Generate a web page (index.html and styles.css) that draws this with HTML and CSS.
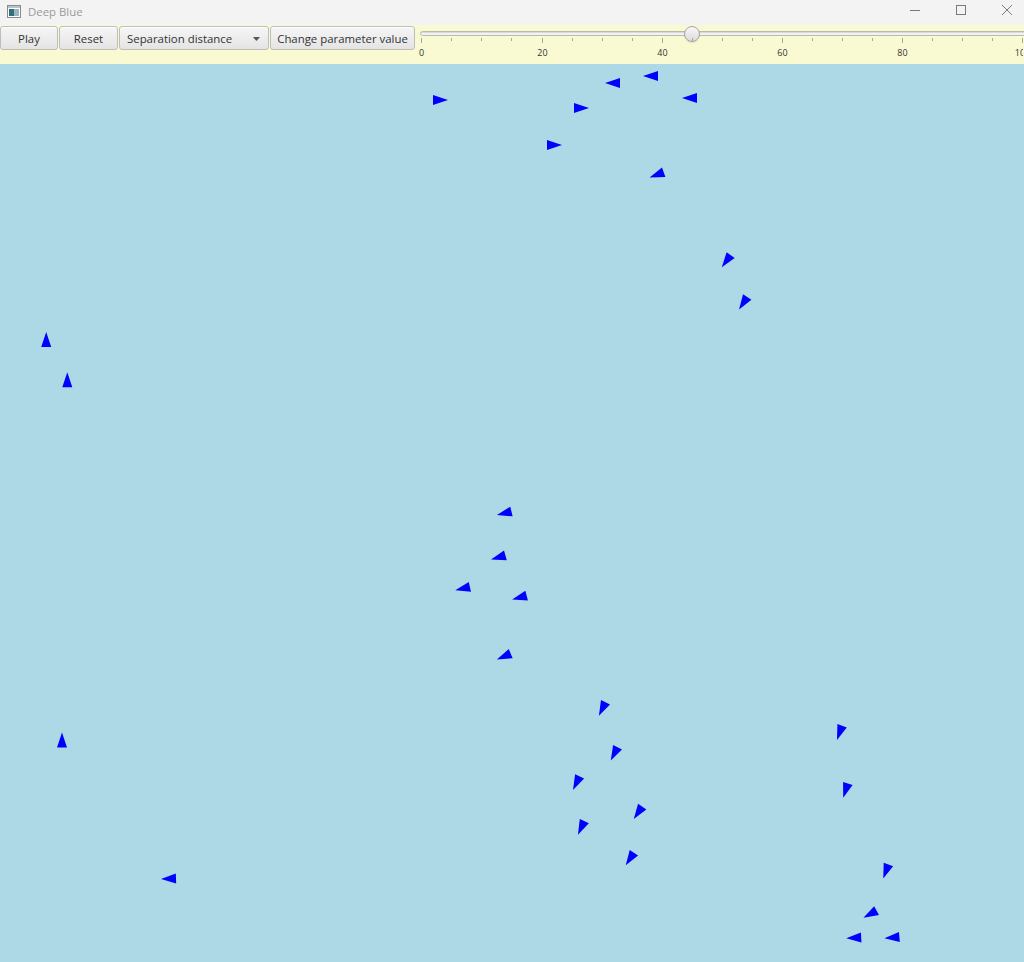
FILE: index.html
```html
<!DOCTYPE html>
<html>
<head>
<meta charset="utf-8">
<title>Deep Blue</title>
<link rel="stylesheet" href="styles.css">
</head>
<body>
<div class="window">
  <header class="titlebar">
    <div class="title-left">
      <svg class="app-icon" width="14" height="13" viewBox="0 0 14 13">
        <rect x="0.5" y="0.5" width="13" height="12" fill="#ffffff" stroke="#8a8a8a"/>
        <rect x="1" y="1" width="12" height="2" fill="#b8c4cc"/>
        <rect x="2" y="4" width="5" height="7" fill="#2e6f7a"/>
        <rect x="7" y="4" width="5" height="7" fill="#9fb3bd"/>
      </svg>
      <span class="title-text">Deep Blue</span>
    </div>
    <div class="win-controls">
      <svg class="wc" width="46" height="24" viewBox="0 0 46 24"><line x1="24" y1="10.5" x2="34" y2="10.5" stroke="#7a7a7a" stroke-width="1"/></svg>
      <svg class="wc" width="46" height="24" viewBox="0 0 46 24"><rect x="24.5" y="5.5" width="9" height="9" fill="none" stroke="#7a7a7a" stroke-width="1"/></svg>
      <svg class="wc" width="46" height="24" viewBox="0 0 46 24"><path d="M24 5 L34 15 M34 5 L24 15" stroke="#7a7a7a" stroke-width="1" fill="none"/></svg>
    </div>
  </header>
  <div class="toolbar">
    <div class="buttons">
      <button class="btn btn-play">Play</button>
      <button class="btn btn-reset">Reset</button>
      <button class="btn combo"><span>Separation distance</span><svg class="combo-arrow" width="7" height="4" viewBox="0 0 7 4"><path d="M0 0 H7 L3.5 4 Z" fill="#555"/></svg></button>
      <button class="btn btn-change">Change parameter value</button>
    </div>
    <div class="slider">
      <div class="track"></div>
      <div class="thumb" style="left: 265px"></div>
      <svg class="ticks" width="604" height="39" viewBox="0 0 604 39">
        <g stroke="#a8a8a0" stroke-width="1">
          <line x1="2.5" y1="13" x2="2.5" y2="18"/>
          <line x1="32.5" y1="13" x2="32.5" y2="16"/>
          <line x1="62.5" y1="13" x2="62.5" y2="16"/>
          <line x1="92.5" y1="13" x2="92.5" y2="16"/>
          <line x1="123.5" y1="13" x2="123.5" y2="18"/>
          <line x1="153.5" y1="13" x2="153.5" y2="16"/>
          <line x1="183.5" y1="13" x2="183.5" y2="16"/>
          <line x1="213.5" y1="13" x2="213.5" y2="16"/>
          <line x1="243.5" y1="13" x2="243.5" y2="18"/>
          <line x1="273.5" y1="13" x2="273.5" y2="16"/>
          <line x1="303.5" y1="13" x2="303.5" y2="16"/>
          <line x1="333.5" y1="13" x2="333.5" y2="16"/>
          <line x1="363.5" y1="13" x2="363.5" y2="18"/>
          <line x1="393.5" y1="13" x2="393.5" y2="16"/>
          <line x1="423.5" y1="13" x2="423.5" y2="16"/>
          <line x1="453.5" y1="13" x2="453.5" y2="16"/>
          <line x1="483.5" y1="13" x2="483.5" y2="18"/>
          <line x1="513.5" y1="13" x2="513.5" y2="16"/>
          <line x1="543.5" y1="13" x2="543.5" y2="16"/>
          <line x1="573.5" y1="13" x2="573.5" y2="16"/>
          <line x1="603.5" y1="13" x2="603.5" y2="18"/>
        </g>
        <g class="tick-labels" fill="#333">
          <text x="2.5" y="31" text-anchor="middle">0</text>
          <text x="123.5" y="31" text-anchor="middle">20</text>
          <text x="243.5" y="31" text-anchor="middle">40</text>
          <text x="363.5" y="31" text-anchor="middle">60</text>
          <text x="483.5" y="31" text-anchor="middle">80</text>
          <text x="603.5" y="31" text-anchor="middle">100</text>
        </g>
      </svg>
    </div>
  </div>
  <main class="ocean">
    <svg class="boids" width="1024" height="898" viewBox="0 64 1024 898">
      <defs>
        <polygon id="b" points="10,0 -5,-5 -5,5" fill="#0000ff"/>
      </defs>
      <use href="#b" transform="translate(438,100) rotate(0)"/>
      <use href="#b" transform="translate(615,83) rotate(180)"/>
      <use href="#b" transform="translate(653,76) rotate(180)"/>
      <use href="#b" transform="translate(692,98) rotate(180)"/>
      <use href="#b" transform="translate(579,108) rotate(0)"/>
      <use href="#b" transform="translate(552,145) rotate(0)"/>
      <use href="#b" transform="translate(659,174) rotate(160)"/>
      <use href="#b" transform="translate(727.7,259.2) rotate(126)"/>
      <use href="#b" transform="translate(744.5,301.2) rotate(123)"/>
      <use href="#b" transform="translate(46.2,342) rotate(-90)"/>
      <use href="#b" transform="translate(67.3,382.3) rotate(-90)"/>
      <use href="#b" transform="translate(506.6,512.7) rotate(166)"/>
      <use href="#b" transform="translate(500.6,556.8) rotate(164)"/>
      <use href="#b" transform="translate(465,588) rotate(167)"/>
      <use href="#b" transform="translate(521.8,596.9) rotate(165)"/>
      <use href="#b" transform="translate(506.1,655.6) rotate(157)"/>
      <use href="#b" transform="translate(603.3,706.7) rotate(116)"/>
      <use href="#b" transform="translate(615.3,751.7) rotate(117)"/>
      <use href="#b" transform="translate(577.4,780.9) rotate(116)"/>
      <use href="#b" transform="translate(639.4,810.8) rotate(124)"/>
      <use href="#b" transform="translate(582.2,825.7) rotate(115)"/>
      <use href="#b" transform="translate(631.2,856.9) rotate(123)"/>
      <use href="#b" transform="translate(840.4,730.5) rotate(110)"/>
      <use href="#b" transform="translate(846.3,788.3) rotate(108)"/>
      <use href="#b" transform="translate(886.7,869.2) rotate(110)"/>
      <use href="#b" transform="translate(872.2,913) rotate(151)"/>
      <use href="#b" transform="translate(856.2,937.8) rotate(177)"/>
      <use href="#b" transform="translate(894.4,937.4) rotate(175)"/>
      <use href="#b" transform="translate(62,742.5) rotate(-90)"/>
      <use href="#b" transform="translate(171,878.7) rotate(178)"/>
    </svg>
  </main>
</div>
</body>
</html>
```

FILE: styles.css
```css
* { box-sizing: border-box; }
html, body {
  margin: 0;
  padding: 0;
  width: 1024px;
  height: 962px;
  overflow: hidden;
  background: #add8e6;
  font-family: "Open Sans", "Noto Sans", "Liberation Sans", sans-serif;
}
.window {
  display: flex;
  flex-direction: column;
  width: 1024px;
  height: 962px;
}
.titlebar {
  height: 25px;
  background: #f3f3f3;
  display: flex;
  justify-content: space-between;
  align-items: flex-start;
  flex: none;
}
.title-left {
  display: flex;
  align-items: center;
  height: 22px;
  padding-left: 7px;
  gap: 7px;
}
.app-icon { display: block; }
.title-text {
  font-size: 11.4px;
  color: #9a9a9a;
}
.win-controls {
  display: flex;
}
.wc { display: block; }
.toolbar {
  height: 39px;
  flex: none;
  background: #fafad2;
  display: flex;
  align-items: flex-start;
}
.buttons {
  display: flex;
  gap: 1px;
  padding-top: 1px;
}
.btn {
  height: 24px;
  margin: 0;
  padding: 0 8px;
  font-family: "Open Sans", "Noto Sans", "Liberation Sans", sans-serif;
  font-size: 11.4px;
  color: #333;
  background: linear-gradient(#f6f6f6, #e4e4e4);
  border: 1px solid #bdbdbd;
  border-radius: 3px;
  box-shadow: inset 0 1px 0 #ffffff;
  display: flex;
  align-items: center;
  justify-content: center;
}
.btn-play { width: 58px; }
.btn-reset { width: 59px; }
.combo {
  width: 150px;
  justify-content: space-between;
  padding: 0 8px 0 7px;
}
.btn-change { width: 145px; padding: 0; }
.combo-arrow { display: block; margin-top: 1px; }
.slider {
  position: relative;
  margin-left: 4px;
  width: 604px;
  height: 39px;
}
.track {
  position: absolute;
  left: 1px;
  top: 6px;
  width: 640px;
  height: 5px;
  border-radius: 3px;
  background: #f4f4f4;
  border: 1px solid #b9b9b2;
  box-shadow: inset 0 1px 1px #d8d8d8;
}
.thumb {
  position: absolute;
  top: 1px;
  width: 16px;
  height: 16px;
  border-radius: 50%;
  background: linear-gradient(#f7f7f7, #dcdcdc);
  border: 1px solid #a4a4a4;
  box-shadow: 0 1px 1px rgba(0,0,0,0.1);
}
.ticks {
  position: absolute;
  left: 0;
  top: 0;
}
.tick-labels {
  font-family: "Open Sans", "Noto Sans", "Liberation Sans", sans-serif;
  font-size: 9px;
}
.ocean {
  flex: 1;
  background: #add8e6;
  position: relative;
}
.boids { display: block; }
```
